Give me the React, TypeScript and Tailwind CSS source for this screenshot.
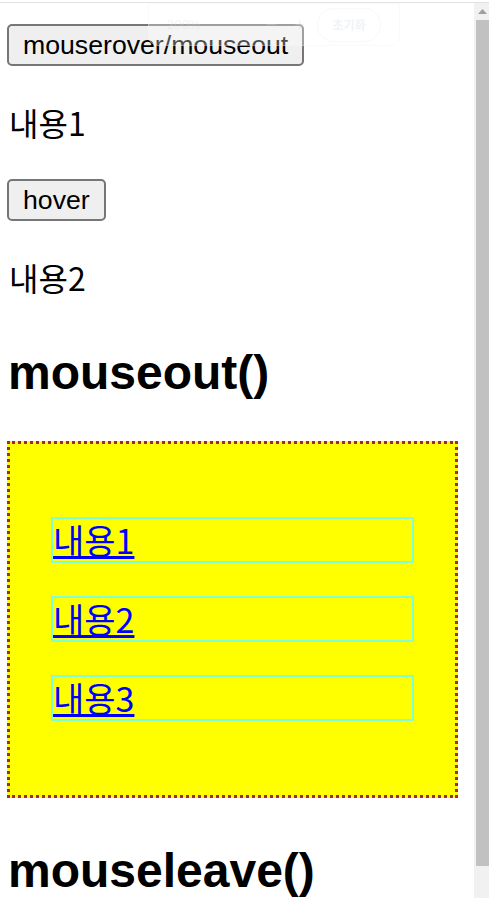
import React from 'react';

const btnFont = { fontFamily: '"Liberation Sans", Arial, sans-serif' };
const krFont = { fontFamily: '"Noto Sans CJK KR", "Noto Sans", sans-serif' };
const headFont = { fontFamily: '"Liberation Sans", "Noto Sans CJK KR", sans-serif' };

function ZoomBar() {
  // faint zoom control floating over the top of the page
  return (
    <div className="absolute left-[148px] top-[3px] flex h-[43px] w-[252px] items-center rounded-b-[10px] border border-[#f5f7f9] bg-white/60 px-[18px] opacity-50">
      <span className="text-[13px] text-[#e6ebf0]" style={btnFont}>200%</span>
      <span className="ml-[66px] text-[18px] text-[#e6ebf0]">−</span>
      <span className="ml-[18px] text-[18px] text-[#e6ebf0]">+</span>
      <span className="ml-[12px] flex h-[34px] w-[68px] items-center justify-center rounded-full border border-[#f2f4f7] text-[12px] font-bold text-[#e3eaf2]" style={krFont}>
        초기화
      </span>
    </div>
  );
}

function Scrollbar() {
  return (
    <div className="flex w-[15px] flex-col bg-[#f1f1f1]">
      <div className="flex h-[17px] items-center justify-center">
        <svg width="9" height="5" viewBox="0 0 9 5" className="ml-[2px]">
          <path d="M0 5 L4.5 0 L9 5 Z" fill="#a899a8" />
        </svg>
      </div>
      <div className="ml-[2px] h-[846px] bg-[#c1c1c1]" />
    </div>
  );
}

const items = ['내용1', '내용2', '내용3'];

export default function App() {
  return (
    <div className="relative h-[898px] overflow-hidden bg-white">
      <div className="h-[3px] border-b border-[#e2e2e2]" />
      <div className="flex h-[895px]">
        <main className="w-[474px] pl-[7px] text-black">
          <button
            className="mt-[21px] block h-[42px] rounded-[5px] border-2 border-[#767676] bg-[#efefef] px-[14px] text-[26.67px] leading-none text-black"
            style={btnFont}
          >
            mouserover/mouseout
          </button>
          <p className="mt-[32px] ml-[2px] text-[32px] leading-[48px]" style={krFont}>내용1</p>
          <button
            className="mt-[33px] block h-[42px] rounded-[5px] border-2 border-[#767676] bg-[#efefef] px-[14px] text-[26.67px] leading-none text-black"
            style={btnFont}
          >
            hover
          </button>
          <p className="mt-[32px] ml-[2px] text-[32px] leading-[48px]" style={krFont}>내용2</p>

          <h2 className="mt-[40px] ml-[1px] text-[48px] font-bold leading-[64px]" style={headFont}>mouseout()</h2>

          <div className="mt-[36px] w-[451px] border-[3px] border-dotted border-[#a52a2a] bg-[#ffff00] px-[41px] pt-[73px] pb-[74px]">
            <ul className="flex flex-col gap-[33px]">
              {items.map((t) => (
                <li key={t} className="h-[46px] border-2 border-[#7fffd4]">
                  <a href="#" className="text-[34px] leading-[42px] text-[#0000ff] underline" style={krFont}>
                    {t}
                  </a>
                </li>
              ))}
            </ul>
          </div>

          <h2 className="mt-[41px] ml-[1px] text-[48px] font-bold leading-[64px]" style={headFont}>mouseleave()</h2>
        </main>
        <Scrollbar />
      </div>
      <ZoomBar />
    </div>
  );
}
